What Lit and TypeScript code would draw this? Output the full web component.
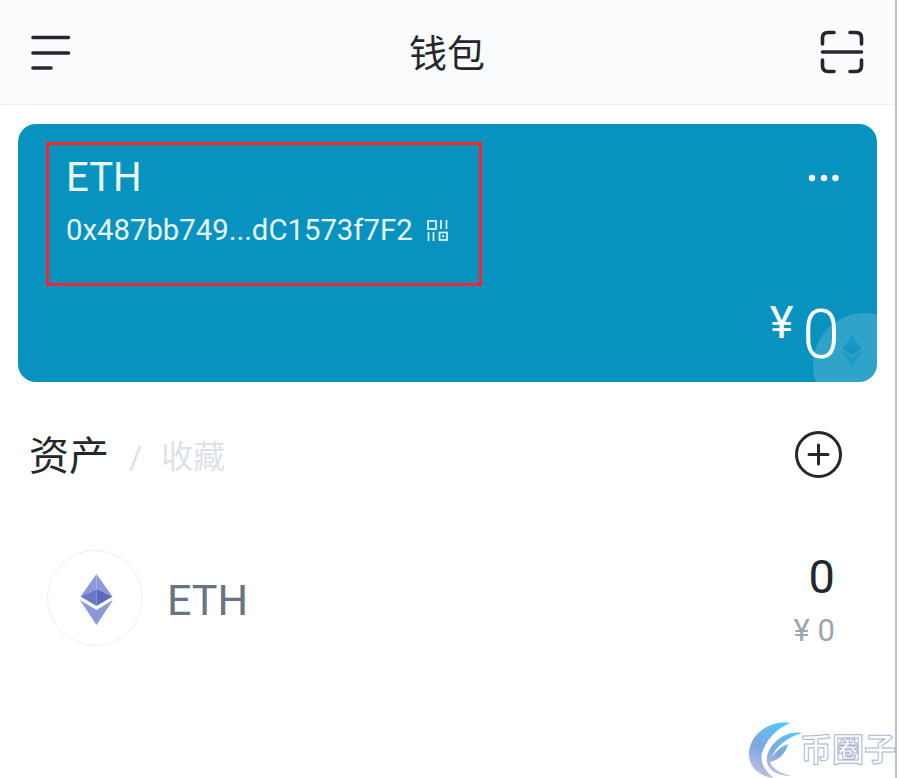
import { LitElement, html, css } from "lit";
import { customElement } from "lit/decorators.js";

const cjk = `Roboto, "Noto Sans CJK SC", sans-serif`;

@customElement("app-root")
export class AppRoot extends LitElement {
  static styles = css`
    :host { display: block; width: 899px; height: 778px; background: #fff; overflow: hidden; position: relative; font-family: ${css([cjk] as any)}; }
    * { box-sizing: border-box; }
    .page { width: 897px; height: 778px; border-right: 2px solid #bfc1c4; display: flex; flex-direction: column; }
    .header { height: 105px; flex: none; background: #fbfcfe; border-bottom: 1px solid #eff0f3; display: flex; align-items: center; justify-content: space-between; padding: 0 31px 0 28px; position: relative; }
    .title { font-size: 38px; color: #24272b; line-height: 1; margin: 4px 0 0 2px; }
    .header svg { display: block; }
    .card { margin: 19px 18px 0; height: 258px; border-radius: 18px; background: #0892c0; position: relative; overflow: hidden; padding: 18px 28px; color: #fff; flex: none; }
    .frame { width: 436px; height: 144px; border: 3px solid #f5262f; padding: 9px 17px; }
    .name { font-size: 40px; line-height: 48px; color: #eaf7fb; }
    .addr { margin-top: 10px; font-size: 29.3px; line-height: 36px; color: #e6f5fa; display: flex; align-items: center; gap: 14px; white-space: nowrap; }
    .more { position: absolute; right: 37px; top: 50px; }
    .circle { position: absolute; left: 795px; top: 189px; width: 104px; height: 104px; border-radius: 50%; background: rgba(255,255,255,.16); }
    .coin { position: absolute; left: 824px; top: 210px; }
    .total { position: absolute; right: 37px; top: 171px; display: flex; align-items: flex-start; gap: 9px; color: #fff; }
    .yen { font-size: 45px; line-height: 44px; margin-top: 6px; }
    .big { font-size: 68px; line-height: 80px; font-weight: 300; }
    .tabs { display: flex; align-items: center; justify-content: space-between; padding: 0 53px 0 29px; height: 96px; margin-top: 25px; flex: none; }
    .tabs .left { display: flex; align-items: center; padding-top: 4px; }
    .tabs svg { margin-bottom: 2px; }
    .active { font-size: 40px; color: #24272b; line-height: 1; }
    .sep { font-size: 32px; color: #dde2e8; margin: 0 19px 0 20px; line-height: 1; }
    .off { font-size: 32px; color: #dde2e8; line-height: 1; }
    .row { display: flex; align-items: center; padding: 0 60px 0 47px; margin-top: 47px; height: 96px; flex: none; }
    .logo { width: 96px; height: 96px; border-radius: 50%; border: 1px solid #eceef0; display: flex; align-items: center; justify-content: center; flex: none; padding: 2px 0 0 2px; }
    .sym { margin-left: 24px; font-size: 43px; color: #68747f; flex: 1; line-height: 1; padding-top: 4px; }
    .vals { text-align: right; padding-top: 4px; }
    .qty { font-size: 47px; line-height: 54px; color: #24272b; font-weight: 400; }
    .fiat { font-size: 31px; line-height: 38px; color: #9ba6b0; margin-top: 8px; }
    .mark { position: absolute; left: 748px; top: 716px; display: flex; align-items: center; }
    .mark span { font-size: 32px; line-height: 1; font-weight: 700; letter-spacing: 0; color: #fff; -webkit-text-stroke: 1px #a9b6d2; margin: 6px 0 0 -2px; white-space: nowrap; }
  `;

  private eth(w: number, h: number, a: string, b: string, c: string) {
    return html`<svg width=${w} height=${h} viewBox="0 0 33 51" aria-hidden="true">
      <path d="M16.5 0 L0.5 22.5 L16.5 15 Z" fill=${a}/>
      <path d="M16.5 0 L32.5 22.5 L16.5 15 Z" fill=${a}/>
      <path d="M0.5 22.5 L16.5 15 L16.5 32 Z" fill=${b}/>
      <path d="M32.5 22.5 L16.5 15 L16.5 32 Z" fill=${c}/>
      <path d="M0 26 L16.5 36 L33 26 L16.5 51 Z" fill=${a}/>
    </svg>`;
  }

  render() {
    return html`
      <div class="page">
        <div class="header">
          <svg width="44" height="40" viewBox="0 0 44 40" fill="none" stroke="#24272b" stroke-width="3.6" stroke-linecap="round">
            <path d="M5 5.500H40.500M5 21H40.500M5 36H23"/>
          </svg>
          <div class="title">钱包</div>
          <svg width="44" height="44" viewBox="0 0 44 44" fill="none" stroke="#24272b" stroke-width="3.6" stroke-linecap="round">
            <path d="M14 2.5H8Q2.5 2.5 2.5 8V14M30 2.5H36Q41.5 2.5 41.5 8V14M2.5 22H41.5M2.5 30V36Q2.5 41.5 8 41.5H14M41.5 30V36Q41.5 41.5 36 41.5H30"/>
          </svg>
        </div>

        <div class="card">
          <div class="frame">
            <div class="name">ETH</div>
            <div class="addr">
              <span>0x487bb749...dC1573f7F2</span>
              <svg width="21" height="21" viewBox="0 0 21 21" fill="none" stroke="#e6f5fa" stroke-width="1.7">
                <rect x="1" y="1" width="8" height="8"/>
                <path d="M14 0V9M19.5 0V9M1.5 12V21M6.5 12V21"/>
                <rect x="12.5" y="12.5" width="7.5" height="7.5"/>
                <rect x="15.2" y="15.2" width="2" height="2" fill="#e6f5fa" stroke="none"/>
              </svg>
            </div>
          </div>
          <svg class="more" width="32" height="8" viewBox="0 0 32 8" fill="#fff">
            <circle cx="4" cy="4" r="3.2"/><circle cx="16" cy="4" r="3.2"/><circle cx="27.500" cy="4" r="3.200"/>
          </svg>
          <div class="circle"></div>
          <div class="coin">${this.eth(20, 33, "#1c99c6", "#1493c2", "#1493c2")}</div>
          <div class="total"><span class="yen">¥</span><span class="big">0</span></div>
        </div>

        <div class="tabs">
          <div class="left">
            <span class="active">资产</span><span class="sep">/</span><span class="off">收藏</span>
          </div>
          <svg width="47" height="47" viewBox="0 0 47 47" fill="none" stroke="#24272b" stroke-width="3" stroke-linecap="round">
            <circle cx="23.500" cy="23.500" r="22"/><path d="M23.500 14V33M14 23.500H33"/>
          </svg>
        </div>

        <div class="row">
          <div class="logo">${this.eth(33, 51, "#8c98d8", "#6a78c8", "#5b69c0")}</div>
          <div class="sym">ETH</div>
          <div class="vals">
            <div class="qty">0</div>
            <div class="fiat">¥ 0</div>
          </div>
        </div>
      </div>

      <div class="mark">
        <svg width="54" height="62" viewBox="0 0 54 62">
          <defs>
            <linearGradient id="g" x1="0.7" y1="0" x2="0.3" y2="1">
              <stop offset="0" stop-color="#56c4f2"/>
              <stop offset="0.55" stop-color="#7fa8e0"/>
              <stop offset="1" stop-color="#c3bfe2"/>
            </linearGradient>
          </defs>
          <path d="M42 7C24 4 3 16 1 36C0 50 10 60 26 62C15 54 11 44 15 34C19 23 30 12 42 7Z" fill="url(#g)"/>
          <path d="M54 17C38 14 23 26 19 40C17 50 24 60 44 60C32 58 24 52 22 46C32 44 38 36 40 28C32 31 26 37 24 42C26 32 38 22 54 17Z" fill="url(#g)"/>
        </svg>
        <span>币圈子</span>
      </div>
    `;
  }
}
